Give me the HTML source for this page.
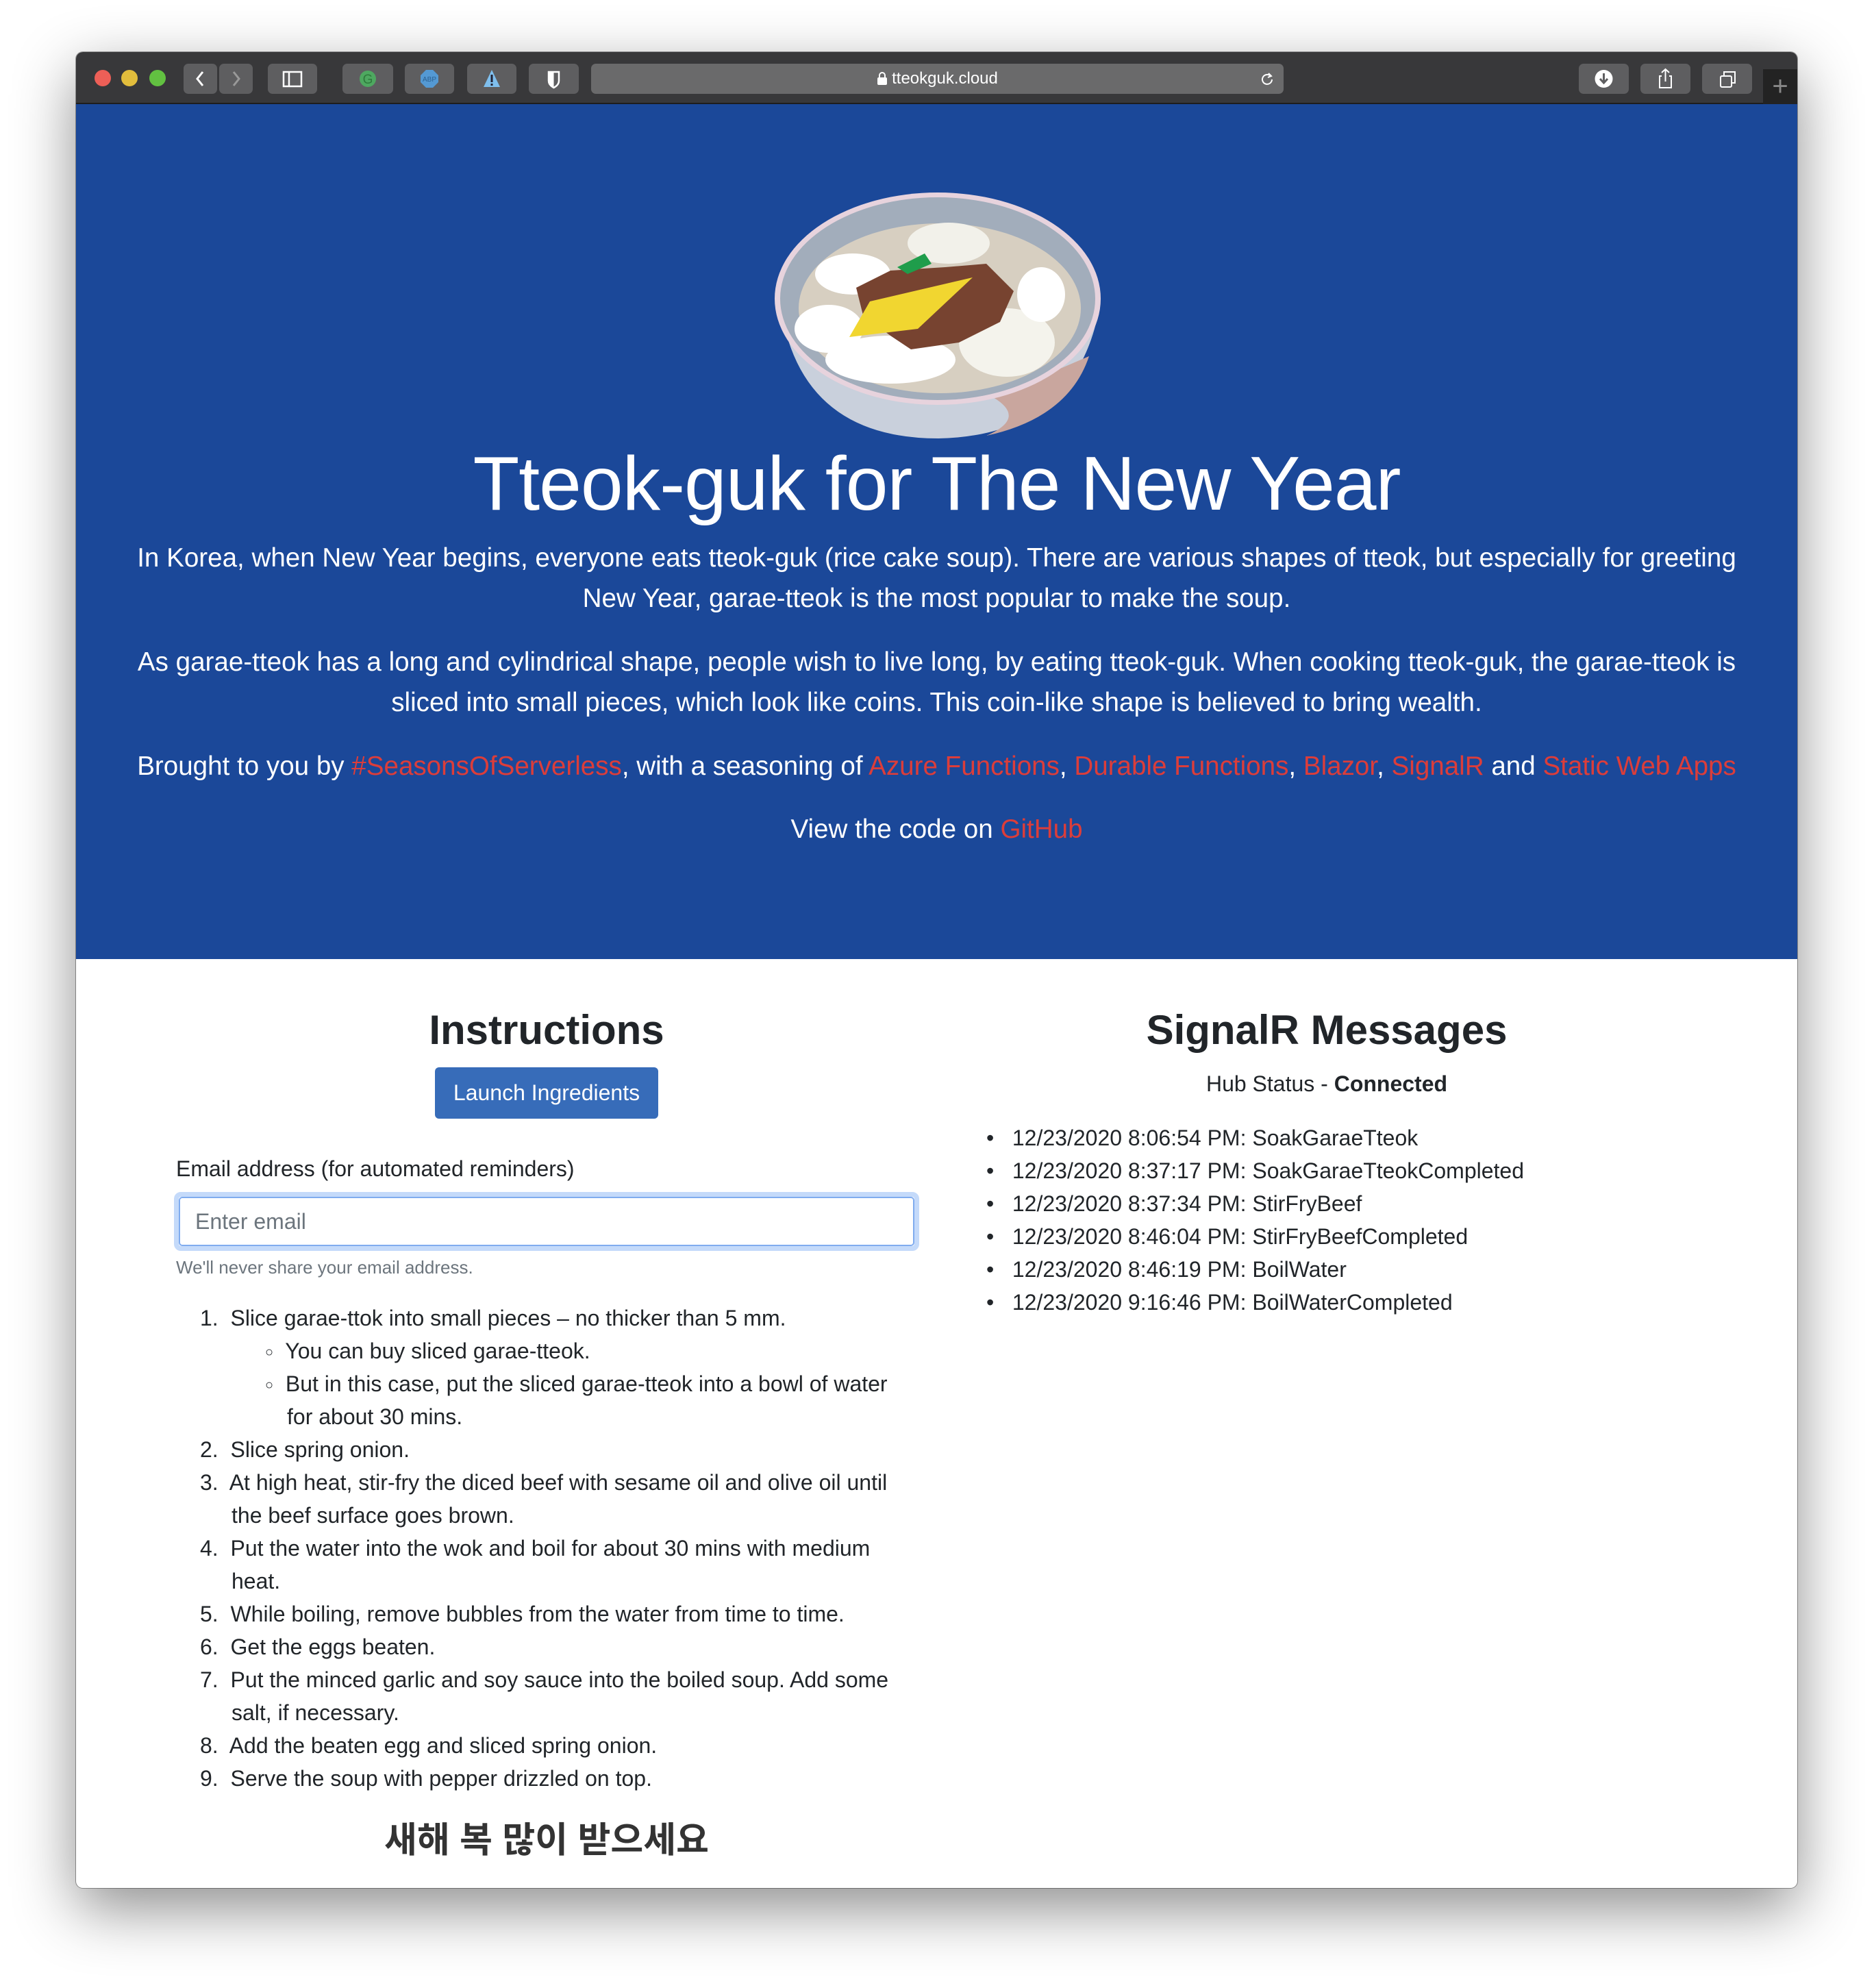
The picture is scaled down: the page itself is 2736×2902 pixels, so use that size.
<!DOCTYPE html>
<html><head><meta charset="utf-8"><style>
*{box-sizing:border-box;margin:0;padding:0}
body{width:2736px;height:2902px;background:#fff;font-family:"Liberation Sans",Arial,sans-serif;position:relative;overflow:hidden;color:#212529}
.win{position:absolute;left:111px;top:76px;width:2513px;height:2680px;border-radius:10px;box-shadow:0 30px 90px rgba(0,0,0,.45),0 0 0 1px rgba(0,0,0,.35);background:#fff;overflow:hidden}
.tb{position:absolute;left:0;top:0;width:100%;height:76px;background:#38383a;border-bottom:2px solid #1e1e1e}
.light{position:absolute;top:26px;width:24px;height:24px;border-radius:50%}
.btn{position:absolute;top:17px;height:44px;background:#5e5e60;border-radius:7px}
.addr{position:absolute;left:752px;top:17px;width:1011px;height:44px;background:#6a6a6b;border-radius:7px;color:#fff;font-size:24px;text-align:center;line-height:44px}
.hero{position:absolute;left:0;top:76px;width:100%;height:1248px;background:#1b4899;color:#fff;text-align:center}
.hero p{position:absolute;left:0;width:100%;font-size:38.6px;line-height:59px;white-space:nowrap}
a{color:#dc3d3a;text-decoration:none}
h1{position:absolute;left:0;width:100%;top:494px;font-size:111px;font-weight:normal;line-height:120px;letter-spacing:-1px}
h2{position:absolute;font-size:60px;font-weight:bold;line-height:70px;text-align:center;color:#212529}
.t{position:absolute;font-size:32px;line-height:48px;white-space:nowrap}
</style></head><body>
<div class="win">
 <div class="tb">
  <div class="light" style="left:27px;background:#ed5f57"></div>
  <div class="light" style="left:66px;background:#e2bd3c"></div>
  <div class="light" style="left:107px;background:#62c141"></div>
  <div class="btn" style="left:157px;width:49px"><svg width="49" height="44"><path d="M28 12 L20 22 L28 32" stroke="#fff" stroke-width="3" fill="none"/></svg></div>
  <div class="btn" style="left:209px;width:49px"><svg width="49" height="44"><path d="M21 12 L29 22 L21 32" stroke="#999" stroke-width="3" fill="none"/></svg></div>
  <div class="btn" style="left:280px;width:72px"><svg width="72" height="44"><rect x="23" y="12" width="26" height="21" stroke="#fff" stroke-width="2.5" fill="none"/><line x1="31" y1="12" x2="31" y2="33" stroke="#fff" stroke-width="2.5"/></svg></div>
  <div class="btn" style="left:389px;width:74px"><svg width="74" height="44"><circle cx="37" cy="22" r="12" fill="#4ea860"/><text x="37" y="29" fill="#2e7a3c" font-size="19" text-anchor="middle" font-family="Liberation Sans">G</text></svg></div>
  <div class="btn" style="left:480px;width:72px"><svg width="72" height="44"><polygon points="31,9 41,9 49,17 49,27 41,35 31,35 23,27 23,17" fill="#5499d3"/><text x="36" y="26" fill="#2a5f8f" font-size="10" text-anchor="middle" font-family="Liberation Sans">ABP</text></svg></div>
  <div class="btn" style="left:571px;width:72px"><svg width="72" height="44"><polygon points="36,9 48,34 24,34" fill="#7fbfee"/><rect x="34.5" y="16" width="3" height="11" fill="#223"/><rect x="34.5" y="29" width="3" height="3" fill="#223"/></svg></div>
  <div class="btn" style="left:661px;width:73px"><svg width="73" height="44"><path d="M29 12 H44 V25 Q44 31 36.5 35 Q29 31 29 25 Z" fill="none" stroke="#fff" stroke-width="2.5"/><path d="M29 12 H36.5 V35 Q29 31 29 25 Z" fill="#fff"/></svg></div>
  <div class="addr"><svg width="16" height="20" style="vertical-align:-3px;margin-right:6px"><rect x="1" y="8" width="14" height="11" rx="2" fill="#fff"/><path d="M4 8 V5 A4 4 0 0 1 12 5 V8" stroke="#fff" stroke-width="2" fill="none"/></svg>tteokguk.cloud<svg style="position:absolute;right:14px;top:12px" width="20" height="20"><path d="M15 6 A7 7 0 1 0 17 11" stroke="#fff" stroke-width="2" fill="none"/><path d="M12 2 L16 6 L11 8" stroke="#fff" stroke-width="2" fill="none"/></svg></div>
  <div class="btn" style="left:2194px;width:73px"><svg width="73" height="44"><circle cx="36.5" cy="22" r="13" fill="#fff"/><path d="M36.5 14 V27 M31 22 L36.5 28 L42 22" stroke="#5e5e60" stroke-width="3" fill="none"/></svg></div>
  <div class="btn" style="left:2284px;width:73px"><svg width="73" height="44"><path d="M31 18 H28 V35 H45 V18 H42 M36.5 26 V8 M31 13 L36.5 8 L42 13" stroke="#fff" stroke-width="2" fill="none"/></svg></div>
  <div class="btn" style="left:2374px;width:73px"><svg width="73" height="44"><rect x="27" y="18" width="16" height="16" rx="2" stroke="#fff" stroke-width="2" fill="none"/><path d="M32 18 V12 H48 V28 H43" stroke="#fff" stroke-width="2" fill="none"/></svg></div>
  <div style="position:absolute;left:2463px;top:25px;width:50px;height:51px;background:#232323;color:#888;font-size:40px;line-height:50px;text-align:center;font-weight:100">+</div>
 </div>
 <div class="hero">
  <svg style="position:absolute;left:1015px;top:120px" width="500" height="380" viewBox="1126 272 500 380">
   <path d="M1140 450 Q1170 640 1370 640 Q1570 636 1605 450 Z" fill="#c9d0dc"/>
   <path d="M1450 580 Q1500 610 1440 636 Q1560 610 1590 520 Z" fill="#c9a69e"/>
   <ellipse cx="1369" cy="436" rx="238" ry="155" fill="#e7d3dd"/>
   <ellipse cx="1369" cy="436" rx="230" ry="148" fill="#a2adbb"/>
   <ellipse cx="1372" cy="450" rx="206" ry="124" fill="#d7cfc1"/>
   <ellipse cx="1245" cy="400" rx="55" ry="30" fill="#fff"/>
   <ellipse cx="1385" cy="355" rx="60" ry="30" fill="#f2f1ea"/>
   <ellipse cx="1210" cy="480" rx="50" ry="35" fill="#fff"/>
   <ellipse cx="1300" cy="525" rx="95" ry="35" fill="#fff"/>
   <ellipse cx="1470" cy="500" rx="70" ry="50" fill="#f4f3ec"/>
   <ellipse cx="1520" cy="430" rx="35" ry="40" fill="#fff"/>
   <path d="M1250 420 L1300 395 L1380 390 L1440 385 L1480 425 L1460 470 L1400 500 L1330 510 L1300 490 L1260 460 Z" fill="#774330"/>
   <path d="M1270 440 L1420 405 L1340 480 L1240 492 Z" fill="#f1d630"/>
   <path d="M1310 390 L1350 370 L1360 385 L1325 400 Z" fill="#1f9d4b"/>
  </svg>
  <h1>Tteok-guk for The New Year</h1>
  <p style="top:633px">In Korea, when New Year begins, everyone eats tteok-guk (rice cake soup). There are various shapes of tteok, but especially for greeting<br>New Year, garae-tteok is the most popular to make the soup.</p>
  <p style="top:785px">As garae-tteok has a long and cylindrical shape, people wish to live long, by eating tteok-guk. When cooking tteok-guk, the garae-tteok is<br>sliced into small pieces, which look like coins. This coin-like shape is believed to bring wealth.</p>
  <p style="top:937px">Brought to you by <a>#SeasonsOfServerless</a>, with a seasoning of <a>Azure Functions</a>, <a>Durable Functions</a>, <a>Blazor</a>, <a>SignalR</a> and <a>Static Web Apps</a></p>
  <p style="top:1029px">View the code on <a>GitHub</a></p>
 </div>
 <h2 style="left:146px;width:1082px;top:1393px">Instructions</h2>
 <div style="position:absolute;left:524px;top:1482px;width:326px;height:75px;background:#376cb9;border-radius:6px;color:#fff;font-size:32px;line-height:75px;text-align:center">Launch Ingredients</div>
 <div class="t" style="left:146px;top:1606px">Email address (for automated reminders)</div>
 <div style="position:absolute;left:143px;top:1664px;width:1088px;height:86px;border:7px solid #c4dafa;border-radius:10px"><div style="width:100%;height:100%;border:2px solid #80acef;border-radius:5px;font-size:32px;color:#6c757d;line-height:68px;padding-left:22px">Enter email</div></div>
 <div class="t" style="left:146px;top:1750px;font-size:26px;color:#6c757d">We'll never share your email address.</div>
 <div class="t" style="left:181px;top:1824px">1.&nbsp; Slice garae-ttok into small pieces – no thicker than 5 mm.</div>
 <div class="t" style="left:276px;top:1872px"><span style="font-size:20px;position:relative;top:-3px">○</span>&nbsp; You can buy sliced garae-tteok.</div>
 <div class="t" style="left:276px;top:1920px"><span style="font-size:20px;position:relative;top:-3px">○</span>&nbsp; But in this case, put the sliced garae-tteok into a bowl of water</div>
 <div class="t" style="left:308px;top:1968px">for about 30 mins.</div>
 <div class="t" style="left:181px;top:2016px">2.&nbsp; Slice spring onion.</div>
 <div class="t" style="left:181px;top:2064px">3.&nbsp; At high heat, stir-fry the diced beef with sesame oil and olive oil until</div>
 <div class="t" style="left:227px;top:2112px">the beef surface goes brown.</div>
 <div class="t" style="left:181px;top:2160px">4.&nbsp; Put the water into the wok and boil for about 30 mins with medium</div>
 <div class="t" style="left:227px;top:2208px">heat.</div>
 <div class="t" style="left:181px;top:2256px">5.&nbsp; While boiling, remove bubbles from the water from time to time.</div>
 <div class="t" style="left:181px;top:2304px">6.&nbsp; Get the eggs beaten.</div>
 <div class="t" style="left:181px;top:2352px">7.&nbsp; Put the minced garlic and soy sauce into the boiled soup. Add some</div>
 <div class="t" style="left:227px;top:2400px">salt, if necessary.</div>
 <div class="t" style="left:181px;top:2448px">8.&nbsp; Add the beaten egg and sliced spring onion.</div>
 <div class="t" style="left:181px;top:2496px">9.&nbsp; Serve the soup with pepper drizzled on top.</div>
 <div style="position:absolute;left:146px;width:1082px;top:2568px;text-align:center;font-size:52px;font-weight:bold;font-family:'Liberation Sans','Noto Sans CJK KR',sans-serif;color:#333">새해 복 많이 받으세요</div>
 <h2 style="left:1285px;width:1082px;top:1393px">SignalR Messages</h2>
 <div class="t" style="left:1285px;width:1082px;text-align:center;top:1482px">Hub Status - <b>Connected</b></div>
 <div class="t" style="left:1329px;top:1561px">•&nbsp;&nbsp; 12/23/2020 8:06:54 PM: SoakGaraeTteok</div>
 <div class="t" style="left:1329px;top:1609px">•&nbsp;&nbsp; 12/23/2020 8:37:17 PM: SoakGaraeTteokCompleted</div>
 <div class="t" style="left:1329px;top:1657px">•&nbsp;&nbsp; 12/23/2020 8:37:34 PM: StirFryBeef</div>
 <div class="t" style="left:1329px;top:1705px">•&nbsp;&nbsp; 12/23/2020 8:46:04 PM: StirFryBeefCompleted</div>
 <div class="t" style="left:1329px;top:1753px">•&nbsp;&nbsp; 12/23/2020 8:46:19 PM: BoilWater</div>
 <div class="t" style="left:1329px;top:1801px">•&nbsp;&nbsp; 12/23/2020 9:16:46 PM: BoilWaterCompleted</div>
</div>
</body></html>
